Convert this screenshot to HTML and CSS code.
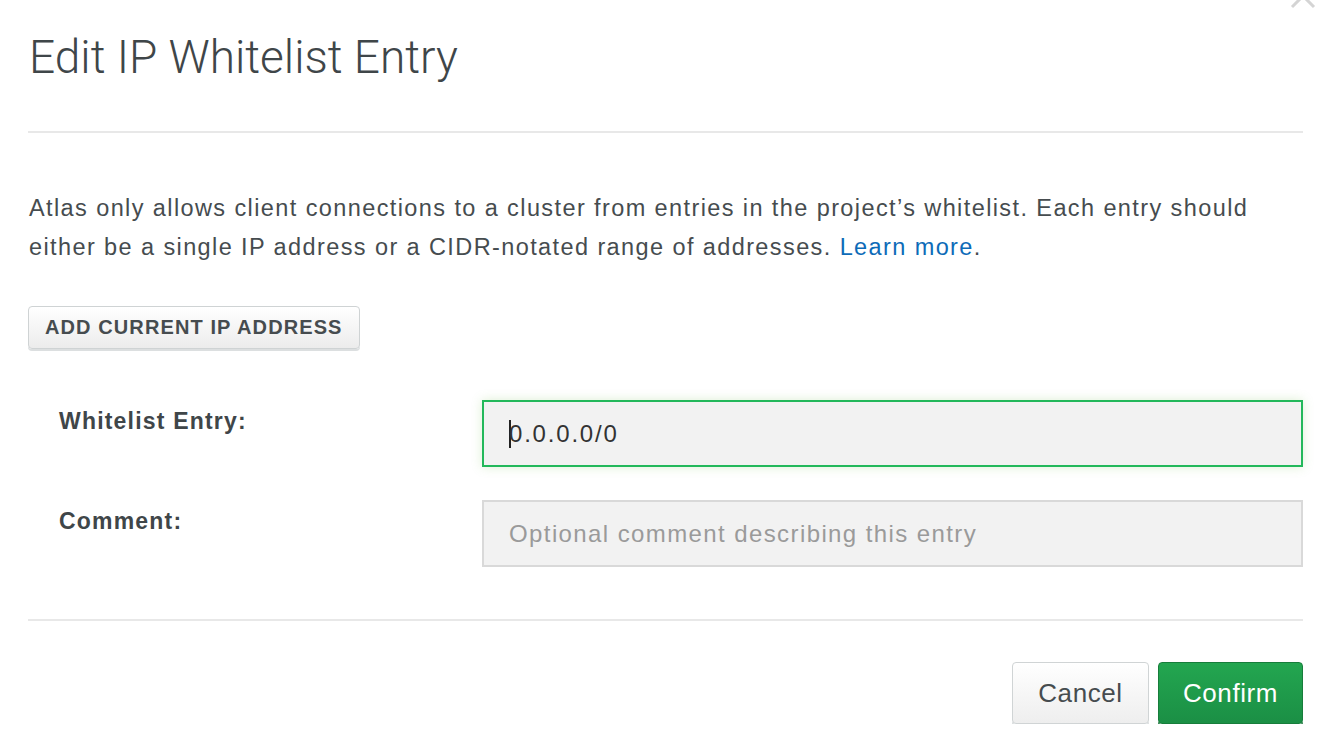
FILE: index.html
```html
<!DOCTYPE html>
<html lang="en">
<head>
<meta charset="utf-8">
<title>Edit IP Whitelist Entry</title>
<link rel="stylesheet" href="styles.css">
</head>
<body>
<div class="modal">
  <button class="close" aria-label="Close">
    <svg width="26" height="26" viewBox="0 0 26 26"><path d="M2 2 L24 24 M24 2 L2 24" stroke="#d4d4d4" stroke-width="3" fill="none"/></svg>
  </button>
  <header class="modal-header">
    <h1 class="title">Edit IP Whitelist Entry</h1>
  </header>
  <section class="modal-body">
    <p class="intro">Atlas only allows client connections to a cluster from entries in the project’s whitelist. Each entry should either be a single IP address or a CIDR-notated range of addresses. <a class="link" href="#">Learn more</a>.</p>
    <button class="btn-add">ADD CURRENT IP ADDRESS</button>
    <div class="form-grid">
      <label class="field-label">Whitelist Entry:</label>
      <div class="field field-focus"><span class="caret"></span>0.0.0.0/0</div>
      <label class="field-label">Comment:</label>
      <div class="field field-placeholder">Optional comment describing this entry</div>
    </div>
  </section>
  <footer class="modal-footer">
    <button class="btn btn-cancel">Cancel</button>
    <button class="btn btn-confirm">Confirm</button>
  </footer>
</div>
</body>
</html>
```
FILE: styles.css
```css
html, body {
  margin: 0;
  padding: 0;
  background: #ffffff;
}
body {
  font-family: "Liberation Sans", Arial, sans-serif;
  color: #464c4f;
}
.modal {
  position: relative;
  padding: 0 39px 0 28px;
  display: flex;
  flex-direction: column;
}
.close {
  position: absolute;
  top: -17px;
  right: 26px;
  border: 0;
  background: none;
  padding: 0;
  width: 26px;
  height: 26px;
}
.modal-header {
  padding-top: 27px;
  border-bottom: 2px solid #e8e8e8;
  padding-bottom: 44px;
}
.title {
  margin: 0 0 0 1px;
  font-family: "Roboto", "Liberation Sans", sans-serif;
  font-weight: 300;
  font-size: 46px;
  line-height: 60px;
  color: #3f4649;
}
.modal-body {
  display: flex;
  flex-direction: column;
  align-items: flex-start;
  padding-top: 56px;
  padding-bottom: 52px;
  border-bottom: 2px solid #e8e8e8;
}
.intro {
  margin: 0 0 0 1px;
  font-size: 23.5px;
  line-height: 39px;
  color: #464c4f;
  letter-spacing: 1.4px;
}
.link {
  color: #0d6bb8;
  text-decoration: none;
}
.btn-add {
  margin-top: 39px;
  height: 43px;
  padding: 0 16px;
  border: 1px solid #cfd3d4;
  border-radius: 4px;
  background: linear-gradient(#ffffff, #ececec);
  box-shadow: 0 2px 0 #dcdfe0;
  font-family: "Liberation Sans", Arial, sans-serif;
  font-weight: bold;
  font-size: 20px;
  letter-spacing: 1.1px;
  color: #464c4f;
}
.form-grid {
  margin-top: 51px;
  width: 100%;
  display: grid;
  grid-template-columns: 454px 1fr;
  row-gap: 33px;
}
.field-label {
  padding: 6px 0 0 31px;
  font-weight: bold;
  font-size: 23px;
  letter-spacing: 1.2px;
  line-height: 30px;
  color: #3f4649;
}
.field {
  box-sizing: border-box;
  height: 67px;
  display: flex;
  align-items: center;
  padding-left: 25px;
  background: #f2f2f2;
  border: 2px solid #d9d9d9;
  font-size: 24px;
  letter-spacing: 1.4px;
  color: #333333;
}
.field-focus {
  border-color: #23b85b;
  box-shadow: 0 0 10px rgba(120, 190, 80, 0.25);
  letter-spacing: 1.8px;
}
.caret {
  display: inline-block;
  width: 2px;
  height: 28px;
  background: #222;
  margin-right: -2px;
}
.field-placeholder {
  color: #9a9a9a;
}
.modal-footer {
  display: flex;
  justify-content: flex-end;
  gap: 9px;
  padding-top: 41px;
}
.btn {
  height: 62px;
  border-radius: 4px;
  font-family: "Liberation Sans", Arial, sans-serif;
  font-size: 26px;
  letter-spacing: 0.6px;
  padding: 0 20px;
}
.btn-cancel {
  width: 137px;
  border: 1px solid #d0d4d5;
  background: linear-gradient(#ffffff, #eeeeee);
  box-shadow: 0 2px 0 #d5d9da;
  color: #464c4f;
}
.btn-confirm {
  width: 145px;
  border: 1px solid #177d3b;
  background: linear-gradient(#23a650, #1b8f45);
  box-shadow: 0 2px 0 #146f35;
  color: #ffffff;
}
```
